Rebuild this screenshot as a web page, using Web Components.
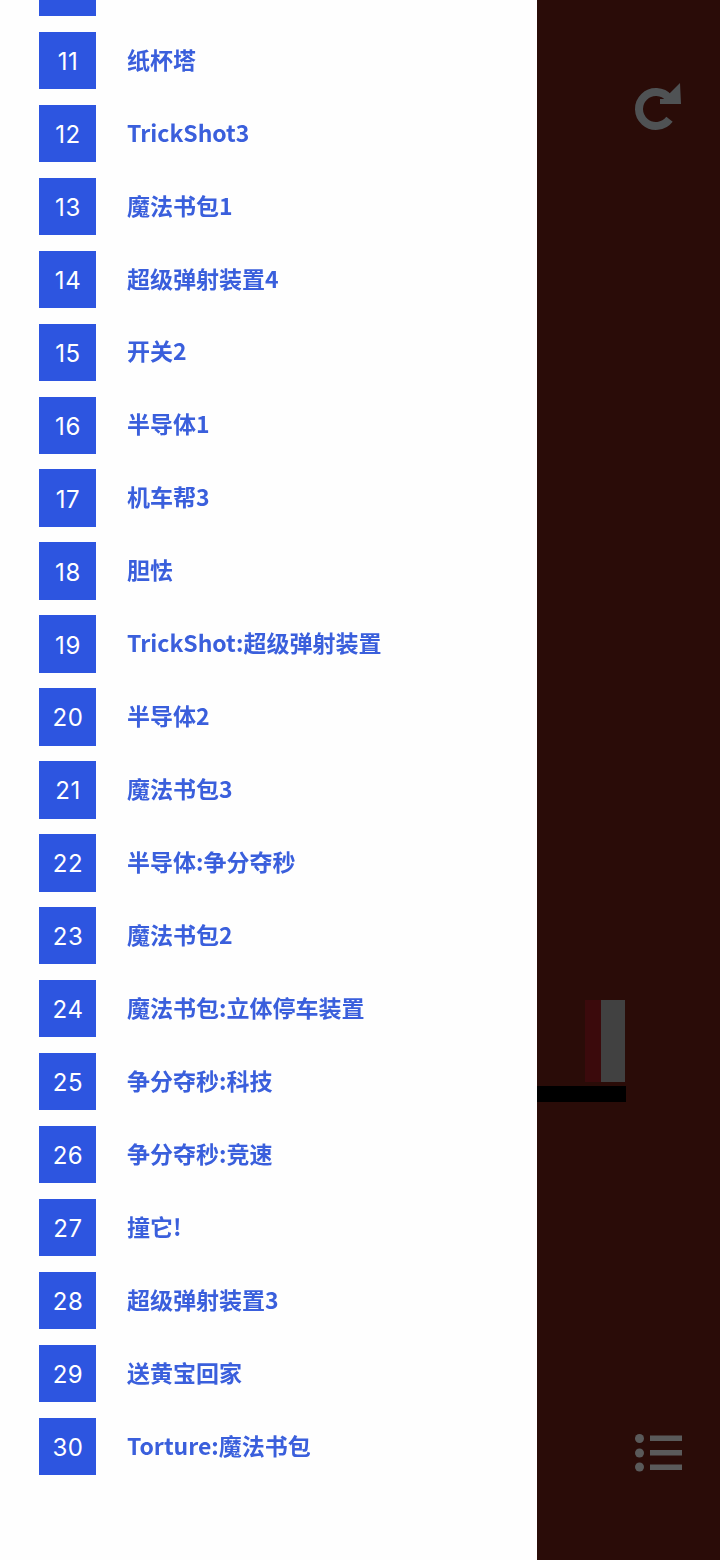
<!DOCTYPE html>
<html lang="zh">
<head>
<meta charset="utf-8">
<title>Levels</title>
<style>
    html, body { margin: 0; height: 1560px; overflow: hidden; background: #2a0c08; }
    body { font-family: "Noto Sans CJK SC", "Noto Sans", sans-serif; }
    game-screen { height: 1560px; }
</style>
</head>
<body>
<game-screen>
    <level-list slot="drawer"></level-list>
    <game-panel slot="panel"></game-panel>
</game-screen>

<script>
const levels = [
    [11, '纸杯塔'], [12, 'TrickShot3'], [13, '魔法书包1'], [14, '超级弹射装置4'],
    [15, '开关2'], [16, '半导体1'], [17, '机车帮3'], [18, '胆怯'],
    [19, 'TrickShot:超级弹射装置'], [20, '半导体2'], [21, '魔法书包3'],
    [22, '半导体:争分夺秒'], [23, '魔法书包2'], [24, '魔法书包:立体停车装置'],
    [25, '争分夺秒:科技'], [26, '争分夺秒:竞速'], [27, '撞它!'], [28, '超级弹射装置3'],
    [29, '送黄宝回家'], [30, 'Torture:魔法书包']
];

class GameScreen extends HTMLElement {
    constructor() {
        super();
        this.attachShadow({ mode: 'open' }).innerHTML = /*html*/`
            <style>
                :host { display: flex; width: 720px; }
                #drawer { flex: 0 0 537px; background: #fefefe; overflow: hidden; }
                #panel { flex: 1; display: flex; }
            </style>
            <div id="drawer"><slot name="drawer"></slot></div>
            <div id="panel"><slot name="panel"></slot></div>`;
    }
}

class LevelRow extends HTMLElement {
    constructor() {
        super();
        this.attachShadow({ mode: 'open' }).innerHTML = /*html*/`
            <style>
                :host { display: flex; align-items: center; height: 57.4px; }
                #num {
                    flex: 0 0 57px;
                    box-sizing: border-box;
                    height: 100%;
                    padding: 2px 0 0 1px;
                    display: flex;
                    align-items: center;
                    justify-content: center;
                    background: #2d55e0;
                    color: #fff;
                    font: 400 24px Inter, sans-serif;
                    letter-spacing: 0.6px;
                }
                #name {
                    margin: 0 0 2px 31px;
                    color: #3a5fdc;
                    font: 700 23px/1.2 "Noto Sans CJK SC", sans-serif;
                    white-space: nowrap;
                    filter: blur(0.3px);
                }
            </style>
            <div id="num"><slot name="num"></slot></div>
            <div id="name"><slot></slot></div>`;
    }
}

class LevelList extends HTMLElement {
    constructor() {
        super();
        const rows = levels.map(([n, name]) =>
            `<level-row><span slot="num">${n}</span>${name}</level-row>`).join('');
        this.attachShadow({ mode: 'open' }).innerHTML = /*html*/`
            <style>
                :host { display: block; }
                #list { display: flex; flex-direction: column; gap: 15.55px; padding-left: 39px; }
                #cut { width: 57px; height: 16.3px; background: #2d55e0; }
            </style>
            <div id="list"><div id="cut"></div>${rows}</div>`;
    }
}

class GamePanel extends HTMLElement {
    constructor() {
        super();
        this.attachShadow({ mode: 'open' }).innerHTML = /*html*/`
            <style>
                :host {
                    display: flex;
                    flex: 1;
                    flex-direction: column;
                    justify-content: space-between;
                    align-items: flex-end;
                    position: relative;
                    box-sizing: border-box;
                    height: 1560px;
                    padding: 83px 38px 88px 0;
                    background: #2a0c08;
                }
                svg { display: block; }
                /* things on the game canvas */
                #ledge { position: absolute; left: 0; top: 1086px; width: 89px; height: 16px; background: #000; }
                #post { position: absolute; left: 48px; top: 1000px; width: 40px; height: 82px; display: flex; }
                #post i { display: block; }
                #post i:nth-child(1) { width: 16px; background: #3b0a0c; }
                #post i:nth-child(2) { flex: 1; background: #414141; }
            </style>
            <svg width="47" height="47" viewBox="0 0 47 47" fill="none" stroke="#4f5254">
                <path d="M34.5 36.3A17 17 0 1 1 34 15L37 18" stroke-width="8"/>
                <path d="M45 0L46 21H25V16H29Z" fill="#4f5254" stroke="none"/>
            </svg>
            <svg width="47" height="38" viewBox="0 0 47 38" fill="#5a5a5a">
                <circle cx="4.5" cy="4.5" r="4.5"/><circle cx="4.5" cy="19" r="4.5"/><circle cx="4.5" cy="33" r="4.5"/>
                <rect x="15" y="1.5" width="32" height="5.5"/><rect x="15" y="16" width="32" height="5.5"/><rect x="15" y="30.5" width="32" height="5.5"/>
            </svg>
            <div id="post"><i></i><i></i></div>
            <div id="ledge"></div>`;
    }
}

customElements.define('game-screen', GameScreen);
customElements.define('level-row', LevelRow);
customElements.define('level-list', LevelList);
customElements.define('game-panel', GamePanel);
</script>
</body>
</html>
